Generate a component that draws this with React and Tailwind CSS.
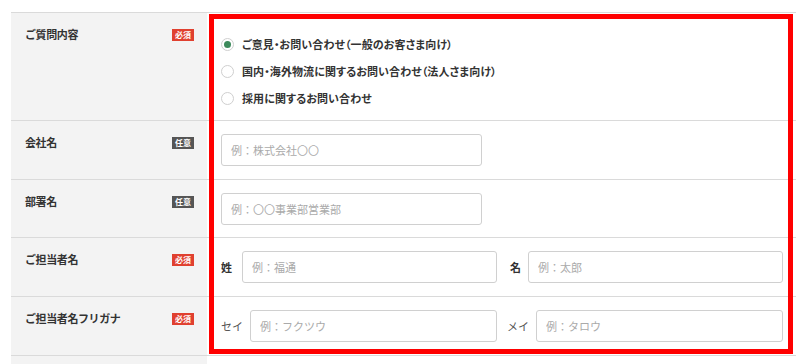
import React from "react";

function Badge({ required }) {
   return (
      <span
         className={`mt-[3px] w-[22px] h-[12px] flex items-center justify-center text-[8px] leading-none font-bold text-white ${
            required ? "bg-[#e0402f]" : "bg-[#555555]"
         }`}
      >
         {required ? "必須" : "任意"}
      </span>
   );
}

function Label({ text, required }) {
   return (
      <div className="w-[196px] shrink-0 bg-[#f3f3f3] flex items-start justify-between pl-[14px] pr-[13px] pt-[13px]">
         <span className="text-[11px] leading-[16px] font-bold text-[#333] tracking-[-0.4px]">{text}</span>
         <Badge required={required} />
      </div>
   );
}

function Field({ placeholder, className = "" }) {
   return (
      <input
         type="text"
         placeholder={placeholder}
         className={`h-[32px] border border-[#d0d0d0] rounded-[3px] bg-white px-[9px] text-[11px] text-[#333] placeholder:text-[#aaaaaa] outline-none ${className}`}
      />
   );
}

function Radio({ checked, children }) {
   return (
      <label className="h-[27px] flex items-center gap-[8px]">
         <span className="w-[13px] h-[13px] rounded-full border border-[#cfcfcf] bg-white flex items-center justify-center">
            {checked && <span className="w-[7px] h-[7px] rounded-full bg-[#3d8a5c]" />}
         </span>
         <span className="text-[11px] font-bold text-[#333] tracking-[0.1px] [font-feature-settings:'palt']">{children}</span>
      </label>
   );
}

const Row = ({ h, children }) => (
   <div className={`flex border-b border-[#dadada] ${h}`}>{children}</div>
);

export default function App() {
   return (
      <div className="relative w-[800px] h-[364px] overflow-hidden bg-white pt-[12px] pl-[11px] font-['Noto_Sans_CJK_JP','Liberation_Sans',sans-serif]">
         <div className="w-[785px] border-t border-[#dadada]">
            {/* ご質問内容 */}
            <Row h="h-[108px]">
               <Label text="ご質問内容" required />
               <div className="flex-1 pl-[14px] pt-[18px]">
                  <Radio checked>ご意見・お問い合わせ（一般のお客さま向け）</Radio>
                  <Radio>国内・海外物流に関するお問い合わせ（法人さま向け）</Radio>
                  <Radio>採用に関するお問い合わせ</Radio>
               </div>
            </Row>

            {/* 会社名 */}
            <Row h="h-[59px]">
               <Label text="会社名" />
               <div className="flex-1 pl-[14px] flex items-center">
                  <Field placeholder="例：株式会社〇〇" className="w-[261px]" />
               </div>
            </Row>

            {/* 部署名 */}
            <Row h="h-[58px]">
               <Label text="部署名" />
               <div className="flex-1 pl-[14px] flex items-center">
                  <Field placeholder="例：〇〇事業部営業部" className="w-[261px]" />
               </div>
            </Row>

            {/* ご担当者名 */}
            <Row h="h-[59px]">
               <Label text="ご担当者名" required />
               <div className="flex-1 pl-[14px] pr-[13px] grid grid-cols-2 gap-x-[10px] items-center">
                  <div className="flex items-center gap-[10px]">
                     <span className="text-[11px] font-bold text-[#333]">姓</span>
                     <Field placeholder="例：福通" className="flex-1 min-w-0" />
                  </div>
                  <div className="flex items-center gap-[7px] pl-[3px]">
                     <span className="text-[11px] font-bold text-[#333]">名</span>
                     <Field placeholder="例：太郎" className="flex-1 min-w-0" />
                  </div>
               </div>
            </Row>

            {/* ご担当者名フリガナ */}
            <Row h="h-[59px]">
               <Label text="ご担当者名フリガナ" required />
               <div className="flex-1 pl-[14px] pr-[13px] grid grid-cols-2 gap-x-[10px] items-center">
                  <div className="flex items-center gap-[7px]">
                     <span className="text-[11px] text-[#555]">セイ</span>
                     <Field placeholder="例：フクツウ" className="flex-1 min-w-0" />
                  </div>
                  <div className="flex items-center gap-[7px]">
                     <span className="text-[11px] text-[#555]">メイ</span>
                     <Field placeholder="例：タロウ" className="flex-1 min-w-0" />
                  </div>
               </div>
            </Row>

            <Row h="h-[40px]">
               <div className="w-[196px] shrink-0 bg-[#f3f3f3]" />
               <div className="flex-1" />
            </Row>
         </div>

         {/* highlight frame */}
         <div className="absolute left-[209px] top-[14px] w-[584px] h-[340px] border-[5px] border-[#ff0000] pointer-events-none" />
      </div>
   );
}
